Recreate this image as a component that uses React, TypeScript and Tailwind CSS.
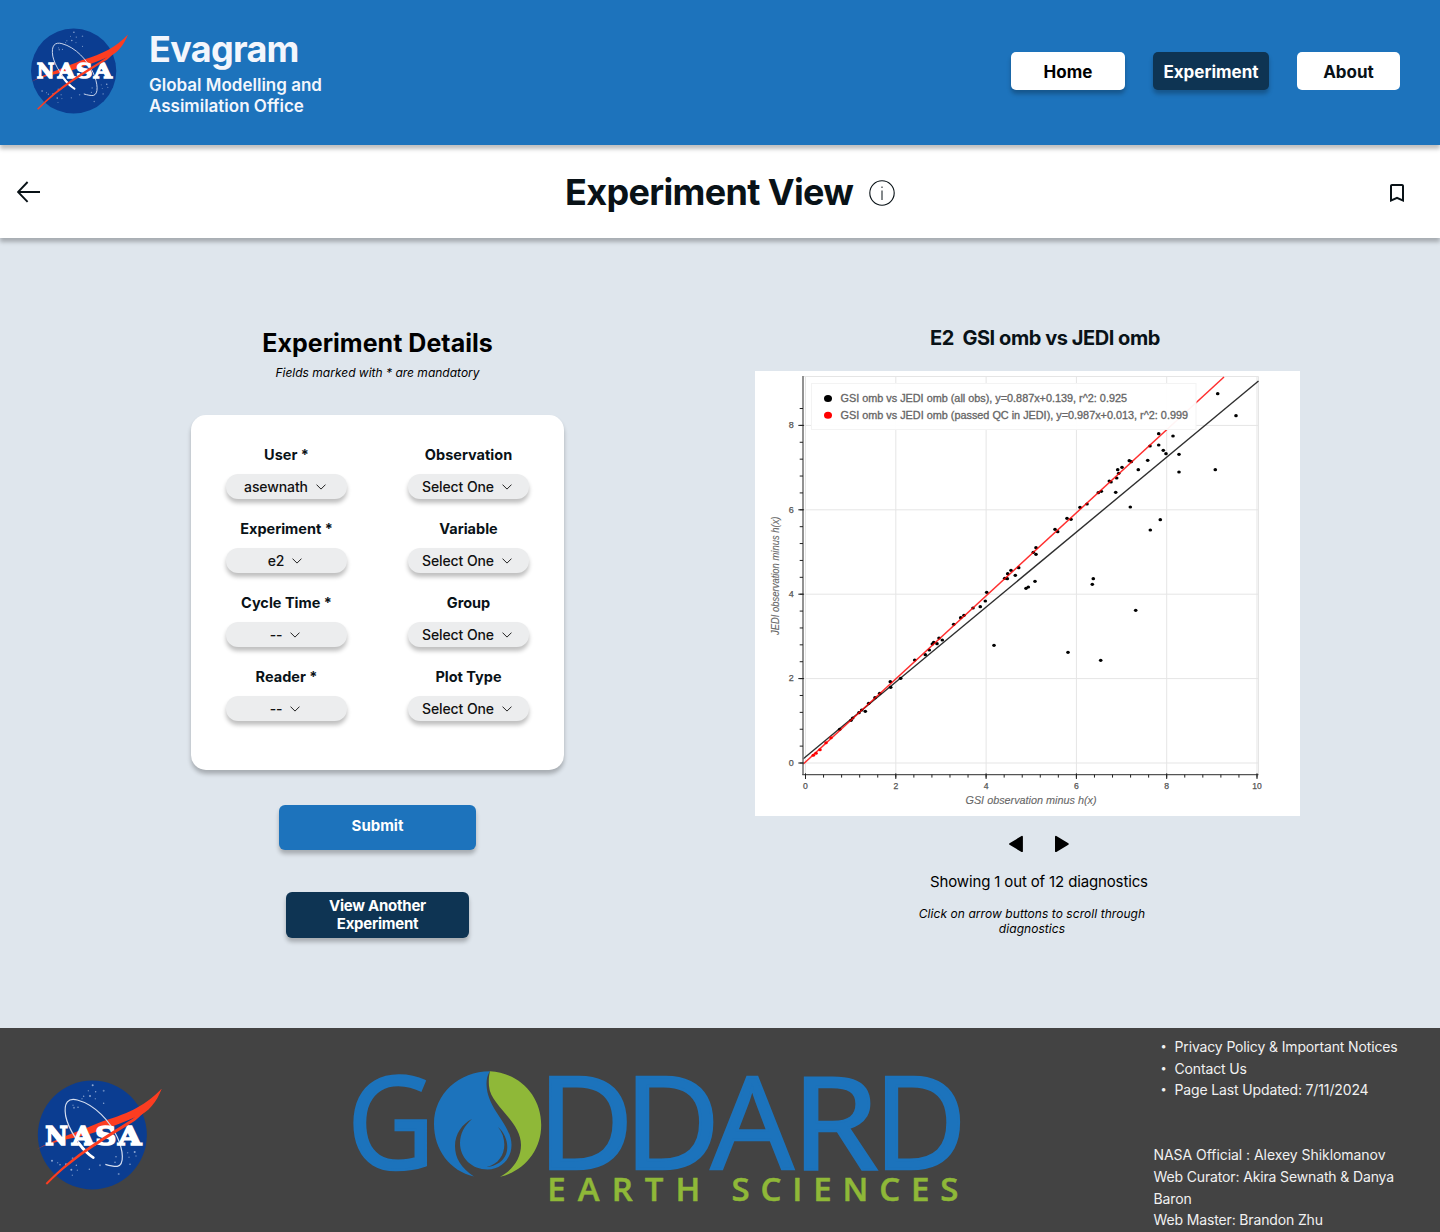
import React from "react";

const shadow = "shadow-[0_4px_4px_rgba(0,0,0,0.25)]";

const allObs: [number, number][] = [
  [1217.7, 393.7], [1236, 415.7], [1158.7, 433.7], [1173, 436], [1150, 446], [1158.7, 445],
  [1163.3, 450.3], [1166, 453.7], [1179, 454.3], [1129.3, 460.7], [1131.3, 461.7], [1147.7, 460.3],
  [1117.7, 469.7], [1122, 467.3], [1118.7, 473.3], [1116.7, 478], [1138.3, 469.7], [1179, 472],
  [1215.3, 469.7], [1109.3, 481], [1111, 482], [1098.3, 492.7], [1101.3, 491.3], [1115.7, 492.3],
  [1080, 507.3], [1087, 504], [1130.3, 507], [1067, 518.3], [1071, 519.3], [1160.3, 519.7],
  [1150.3, 530], [1055, 529.3], [1057.7, 531.7], [1036, 547.7], [1033.3, 552.3], [1036, 554.3],
  [1093.3, 578.7], [1011, 570.3], [1007.7, 573.7], [1018.7, 567.7], [1015.3, 575.3], [1004.7, 578.3],
  [1007.3, 578.7], [986.7, 592.3], [985.3, 601], [980.3, 606.7], [973, 608], [964, 615.3],
  [960.7, 617.7], [953.7, 624.3], [939, 638], [942.3, 640], [933.7, 642.3], [932.3, 644],
  [937, 643.7], [929.3, 650], [925.3, 654.7], [914.7, 660], [900.7, 678.3], [890.3, 681.7],
  [890.7, 687.3], [879.7, 693.3], [875, 697.7], [868.7, 703.3], [861.7, 710], [865.3, 711.3],
  [859, 712.7], [852.7, 718], [851, 720.3], [839.7, 729.3], [994, 645.3], [1035, 581.3],
  [1026, 588.3], [1028.3, 587], [1092.3, 584.3], [1135.7, 610.3], [1068, 652.3], [1100.7, 660.3],
];

const passedObs: [number, number][] = [
  [813.3, 755.3], [816, 753.3], [820, 749.7], [826, 742.7], [831, 737.7],
];

const px = (v: number) => 805.5 + v * 45.15;
const py = (v: number) => 763 - v * 42.2;

function Chart() {
  const xMinor = Array.from({ length: 26 }, (_, i) => i * 0.4);
  const yMinor = Array.from({ length: 22 }, (_, i) => i * 0.4);
  return (
    <svg viewBox="755 371 545 445" className="block h-[445px] w-[545px] bg-white" fontFamily="Liberation Sans, Arial, sans-serif">
      <g stroke="#e5e5e5" strokeWidth="1">
        {[0, 2, 4, 6, 8, 10].map((v) => <line key={v} x1={px(v)} x2={px(v)} y1="376.5" y2="774" />)}
        {[0, 2, 4, 6, 8].map((v) => <line key={v} x1="804" x2="1258.5" y1={py(v)} y2={py(v)} />)}
        <path d="M804 376.5H1258.5V774" fill="none" />
      </g>
      <g fill="#000">
        {allObs.map(([x, y], i) => <ellipse key={i} cx={x} cy={y} rx="1.8" ry="1.6" />)}
      </g>
      <line x1="803" y1="759" x2="1258.5" y2="381" stroke="#000" strokeOpacity="0.82" strokeWidth="1.4" />
      <line x1="803" y1="764.3" x2="1224" y2="377" stroke="#ff0000" strokeOpacity="0.82" strokeWidth="1.5" />
      <g fill="#ff0000">
        {passedObs.map(([x, y], i) => <ellipse key={i} cx={x} cy={y} rx="1.8" ry="1.5" />)}
      </g>
      <line x1="803" x2="803" y1="376" y2="775" stroke="#777" strokeWidth="1.6" />
      <line x1="802.3" x2="1258.5" y1="774.6" y2="774.6" stroke="#555" strokeWidth="1.1" />
      <g stroke="#222" strokeWidth="1">
        {xMinor.map((v) => <line key={v} x1={px(v)} x2={px(v)} y1="774.6" y2="777.6" />)}
        {[0, 2, 4, 6, 8, 10].map((v) => <line key={v} x1={px(v)} x2={px(v)} y1="773.3" y2="779" />)}
        {yMinor.map((v) => <line key={v} x1="799.7" x2="803" y1={py(v)} y2={py(v)} />)}
        {[0, 2, 4, 6, 8].map((v) => <line key={v} x1="798.3" x2="804" y1={py(v)} y2={py(v)} />)}
      </g>
      <g fontSize="8.200" fill="#555" stroke="#555" strokeWidth="0.250">
        {[0, 2, 4, 6, 8, 10].map((v) => (
          <text key={v} x={px(v)} y="789" textAnchor="middle" textLength={v === 10 ? 9.5 : 4.8} lengthAdjust="spacingAndGlyphs">{v}</text>
        ))}
        {[0, 2, 4, 6, 8].map((v) => (
          <text key={v} x="791.2" y={py(v) + 2.8} textAnchor="middle" textLength="5" lengthAdjust="spacingAndGlyphs">{v}</text>
        ))}
      </g>
      <g fill="#666" stroke="#666" strokeWidth="0.100" fontStyle="italic">
        <text x="965.5" y="804" fontSize="10.5" textLength="131" lengthAdjust="spacingAndGlyphs">GSI observation minus h(x)</text>
        <text transform="translate(779 635) rotate(-90)" fontSize="11" textLength="118.5" lengthAdjust="spacingAndGlyphs">JEDI observation minus h(x)</text>
      </g>
      <rect x="811.5" y="383.5" width="384.5" height="46" fill="#fff" fillOpacity="0.95" stroke="#f3f3f3" />
      <ellipse cx="828" cy="398.4" rx="4" ry="3.5" fill="#000" />
      <ellipse cx="828" cy="415.3" rx="4" ry="3.5" fill="#f00" />
      <g fontSize="10" fill="#666" stroke="#666" strokeWidth="0.300">
        <text x="840.5" y="402" textLength="286.5" lengthAdjust="spacingAndGlyphs">GSI omb vs JEDI omb (all obs), y=0.887x+0.139, r^2: 0.925</text>
        <text x="840.5" y="419" textLength="347.5" lengthAdjust="spacingAndGlyphs">GSI omb vs JEDI omb (passed QC in JEDI), y=0.987x+0.013, r^2: 0.999</text>
      </g>
    </svg>
  );
}

const stars: [number, number][] = [
  [278, 196], [265, 212], [287, 215], [311, 212], [251, 229], [246, 236], [270, 228], [286, 236], [311, 250],
  [222, 263], [234, 262], [219, 256], [156, 422], [173, 428], [180, 434], [218, 415], [229, 436], [217, 466],
  [214, 449], [232, 451], [268, 448], [300, 436], [348, 410], [383, 398], [404, 396], [408, 408], [390, 433],
  [356, 462], [345, 427], [387, 412], [198, 433],
];

function NasaLogo({ className, viewBox }: { className: string; viewBox: string }) {
  const letters: [string, number, number][] = [["N", 136, 68], ["A", 216, 66], ["S", 286, 63], ["A", 354, 70]];
  return (
    <svg viewBox={viewBox} preserveAspectRatio="none" className={className} role="img" aria-label="NASA">
      <circle cx="277" cy="345" r="163.5" fill="#0b3d91" />
      <g fill="#b9cbe8">
        {stars.map(([x, y], i) => <circle key={i} cx={x} cy={y} r={i % 3 === 0 ? 3 : 2.2} opacity={i % 2 ? 0.5 : 0.75} />)}
      </g>
      <path d="M108 389C170 355 235 335 310 303C390 279 440 253 485 206C470 246 445 277 412 289C340 320 290 338 230 352C180 362 140 373 108 389Z" fill="#fc3d21" />
      <path d="M280 413C235 372 205 325 197 288C190 246 206 233 232 240C285 254 330 304 352 352C370 392 374 434 352 439C342 440 330 437 316 433" fill="none" stroke="#d5def0" strokeWidth="3.600" />
      <path d="M236 370C250 390 262 402 280 413" fill="none" stroke="#fff" strokeWidth="8" strokeLinecap="round" />
      <g fill="#fff" stroke="#fff" strokeWidth="5" fontFamily="DejaVu Serif, serif" fontWeight="700" fontSize="80">
        {letters.map(([c, x, w], i) => (
          <text key={i} x={x} y="373.500" textLength={w} lengthAdjust="spacingAndGlyphs">{c}</text>
        ))}
      </g>
      <path d="M485 206C462 250 435 275 405 302C330 350 225 408 141 494L137 490C222 400 320 345 398 296C430 270 450 250 485 206Z" fill="#fc3d21" />
    </svg>
  );
}

function GoddardLogo() {
  const letters: [string, number, number, number][] = [
    ["G", 354.5, 0.94, 0.061],
    ["D", 550.5, 1.035, 0.098],
    ["D", 637, 1.035, 0.098],
    ["A", 711, 1.02, 0],
    ["R", 805.2, 1.1, 0.098],
    ["D", 886.2, 1, 0.098],
  ];
  return (
    <svg viewBox="350 1066 616 140" className="h-[140px] w-[616px] overflow-visible" role="img" aria-label="Goddard Earth Sciences">
      <g fill="#1c73bc" stroke="#1c73bc" strokeWidth="2.600" fontFamily="Open Sans, sans-serif" fontSize="128">
        {letters.map(([c, x, s, bearing], i) => (
          <text key={i} transform={`translate(${x - bearing * 128 * s} 1169) scale(${s} 1)`}>{c}</text>
        ))}
      </g>
      <path d="M490 1071.3C459 1071.3 434 1094 434 1124C434 1150 450 1171 474 1176.5C461 1168 455 1158 455 1146C455 1134 462 1124 472 1119C464 1126 460 1134 460 1143C460 1158 472 1169.5 487.500 1169.500C501 1169.500 511.500 1159 511.500 1145C511.500 1124 487 1110 486.500 1084C486.500 1079 487.500 1075 490 1071.300Z" fill="#1c73bc" />
      <path d="M498 1127C511 1138 513 1164 486.500 1167C506 1163 509 1140 498 1127Z" fill="#434343" />
      <path d="M490 1071.300C520 1073 541.200 1096 541.200 1125C541.200 1151 524 1171 500 1176.800C513 1170 521 1158 521 1145C521 1121 490 1105 489 1086C488.500 1080 489 1075 490 1071.300Z" fill="#8fb838" />
      <g fill="#8fb838" stroke="#8fb838" strokeWidth="0.500" fontFamily="Open Sans, sans-serif" fontWeight="600" fontSize="33">
        <text x="547.300" y="1201.300" textLength="153" lengthAdjust="spacing">EARTH</text>
        <text x="731.500" y="1201.300" textLength="227" lengthAdjust="spacing">SCIENCES</text>
      </g>
    </svg>
  );
}

function Chevron() {
  return (
    <svg viewBox="0 0 10 6" className="h-[6px] w-[10px]" fill="none" stroke="#222" strokeWidth="1">
      <path d="M0.500 0.600L5 5.100L9.500 0.600" />
    </svg>
  );
}

function Field({ label, value }: { label: string; value: string }) {
  return (
    <div className="flex h-[74px] flex-col items-center">
      <label className="h-[30px] pt-px text-[14.500px] leading-5 font-bold whitespace-pre text-[#091217]">{label}</label>
      <button className={`flex h-[25px] w-[121px] items-center justify-center gap-2 rounded-[12px] bg-[#ecedee] pr-[3px] text-[14px] leading-5 font-medium tracking-[-0.1px] text-[#111] ${shadow}`}>
        <span>{value}</span>
        <Chevron />
      </button>
    </div>
  );
}

export default function App() {
  return (
    <div className="flex h-[1232px] w-[1440px] flex-col overflow-hidden bg-[#dfe6ed] font-['Inter',sans-serif] text-black">
      <header className={`relative z-20 flex h-[145px] shrink-0 items-start bg-[#1d73bc] ${shadow}`}>
        <NasaLogo viewBox="113.5 180 372 330" className="mt-[27.500px] ml-[31px] h-[86px] w-[97px]" />
        <div className="mt-[28px] ml-[21px] text-[#f3f6fc]">
          <h1 className="text-[36px] leading-[43px] font-bold tracking-[-0.700px]">Evagram</h1>
          <p className="mt-[4px] text-[17px] leading-[21px] font-semibold">Global Modelling and<br />Assimilation Office</p>
        </div>
        <nav className="mt-[52px] mr-10 ml-auto flex gap-7 text-[17px] leading-[40px] font-bold">
          <a className={`h-[38px] w-[114px] rounded-[5px] bg-white text-center ${shadow}`}>Home</a>
          <a className={`h-[38px] w-[116px] rounded-[5px] bg-[#0e3453] text-center text-white ${shadow}`}>Experiment</a>
          <a className="h-[38px] w-[103px] rounded-[5px] bg-white text-center text-[#091217]">About</a>
        </nav>
      </header>

      <section className={`relative z-10 flex h-[93px] shrink-0 items-center bg-white ${shadow}`}>
        <svg viewBox="0 0 24 22" className="ml-[17px] h-[22px] w-[24px]" fill="none" stroke="#091217" strokeWidth="1.900">
          <path d="M23 11H1.500M10.600 1L1 11L10.600 20.800" />
        </svg>
        <div className="ml-[524px] flex w-[330px] items-center justify-between">
          <h2 className="text-[36px] leading-[44px] font-bold tracking-[-0.660px] whitespace-nowrap text-[#091217]">Experiment View</h2>
          <svg viewBox="0 0 26 26" className="mt-[3px] h-[26px] w-[26px]" fill="none" stroke="#091217">
            <circle cx="13" cy="13" r="12.200" strokeWidth="1.100" />
            <path d="M13 10.500V20M13 6.500V8" strokeWidth="1" />
          </svg>
        </div>
        <svg viewBox="0 0 24 24" className="mt-[3px] mr-[31px] ml-auto h-6 w-6" fill="#091217">
          <path d="M17 3H7c-1.100 0-2 .9-2 2v16l7-3 7 3V5c0-1.100-.9-2-2-2zm0 15-5-2.180L7 18V5h10v13z" />
        </svg>
      </section>

      <main className="flex h-[790px] shrink-0">
        <section className="ml-[191px] flex w-[373px] flex-col items-center pt-[90px]">
          <h3 className="text-[25px] leading-[30px] font-bold tracking-[0.03px]">Experiment Details</h3>
          <p className="mt-[6px] text-[12px] leading-[18px] italic">Fields marked with * are mandatory</p>
          <div className={`mt-[33px] flex h-[355px] w-[373px] justify-between rounded-[15px] bg-white px-[35px] pt-[29px] ${shadow}`}>
            <div>
              <Field label="User *" value="asewnath" />
              <Field label="Experiment *" value="e2" />
              <Field label="Cycle Time *" value="--" />
              <Field label="Reader *" value="--" />
            </div>
            <div>
              <Field label="Observation" value="Select One" />
              <Field label="Variable" value="Select One" />
              <Field label="Group" value="Select One" />
              <Field label="Plot Type" value="Select One" />
            </div>
          </div>
          <button className={`mt-[35px] h-[45px] w-[197px] rounded-[6px] bg-[#1d73bc] pb-[3px] text-[15px] leading-5 font-bold text-white ${shadow}`}>Submit</button>
          <button className={`mt-[42px] h-[46px] w-[183px] rounded-[6px] bg-[#0e3453] text-[15px] leading-[18px] font-bold tracking-[-0.250px] text-white ${shadow}`}>View Another<br />Experiment</button>
        </section>

        <section className="ml-[191px] flex w-[545px] flex-col pt-[86px]">
          <h3 className="ml-[175px] h-[47px] text-[20px] leading-[28px] font-bold tracking-[-0.450px] whitespace-pre text-[#091217]">E2  GSI omb vs JEDI omb</h3>
          <Chart />
          <div className="mt-[19px] ml-[253px] flex gap-[29px]">
            <svg viewBox="0 0 17 18" className="h-[18px] w-[17px]" stroke="#000" strokeWidth="1.800" strokeLinejoin="round"><path d="M14 1.800V16.200L2 9Z" /></svg>
            <svg viewBox="0 0 17 18" className="h-[18px] w-[17px]" stroke="#000" strokeWidth="1.800" strokeLinejoin="round"><path d="M1.900 1.800V16.200L13.900 9Z" /></svg>
          </div>
          <p className="mt-[19px] ml-[175px] text-[15px] leading-5 tracking-[-0.140px]">Showing 1 out of 12 diagnostics</p>
          <p className="mt-[14px] ml-[157px] w-[240px] text-center text-[12px] leading-[15px] italic tracking-[0.060px]">Click on arrow buttons to scroll through<br />diagnostics</p>
        </section>
      </main>

      <footer className="flex h-[204px] shrink-0 items-start bg-[#434343] text-[#f1f1f1]">
        <NasaLogo viewBox="108 180 378 330" className="mt-[52px] ml-[36px] h-[110px] w-[126px] shrink-0" />
        <div className="mt-[38px] ml-[188px] shrink-0"><GoddardLogo /></div>
        <div className="mt-[8px] ml-[187.500px] w-[270px] shrink-0 text-[14px] leading-[21.700px] tracking-[-0.140px] whitespace-nowrap">
          <ul className="ml-[7px]">
            {["Privacy Policy & Important Notices", "Contact Us", "Page Last Updated: 7/11/2024"].map((t) => (
              <li key={t} className="flex"><span className="w-[14px] text-[11px]">•</span>{t}</li>
            ))}
          </ul>
          <address className="mt-[43px] not-italic">
            <span className="tracking-[-0.050px]">NASA Official : Alexey Shiklomanov</span><br />Web Curator: Akira Sewnath &amp; Danya<br />Baron<br />Web Master: Brandon Zhu
          </address>
        </div>
      </footer>
    </div>
  );
}
